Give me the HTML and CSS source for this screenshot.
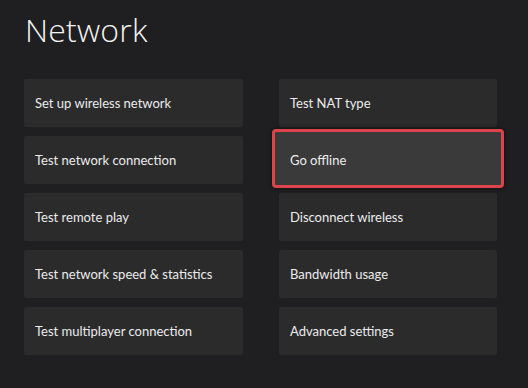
FILE: index.html
```html
<!DOCTYPE html>
<html>
<head>
<meta charset="utf-8">
<link rel="stylesheet" href="styles.css">
</head>
<body>
<main class="page">
  <h1 class="title">Network</h1>
  <div class="grid">
    <div class="tile">Set up wireless network</div>
    <div class="tile">Test network connection</div>
    <div class="tile">Test remote play</div>
    <div class="tile">Test network speed &amp; statistics</div>
    <div class="tile">Test multiplayer connection</div>
    <div class="tile">Test NAT type</div>
    <div class="tile tile-focus"><span class="label">Go offline</span></div>
    <div class="tile">Disconnect wireless</div>
    <div class="tile">Bandwidth usage</div>
    <div class="tile">Advanced settings</div>
  </div>
</main>
</body>
</html>
```
FILE: styles.css
```css
html, body {
  margin: 0;
  padding: 0;
  background: #1f1e20;
  height: 100%;
}
.page {
  padding: 0 24px;
  font-family: "Lato", "Open Sans", sans-serif;
  color: #f0f0f0;
}
.title {
  margin: 0;
  padding-top: 10px;
  padding-left: 1px;
  height: 79px;
  box-sizing: border-box;
  font-family: "Open Sans", sans-serif;
  font-weight: 300;
  font-size: 32px;
  line-height: 40px;
  color: #f4f4f4;
  letter-spacing: 0.2px;
}
.grid {
  display: grid;
  grid-template-columns: 219px 218px;
  grid-template-rows: repeat(5, 48px);
  grid-auto-flow: column;
  column-gap: 36px;
  row-gap: 9px;
}
.tile {
  background: #2b2b2c;
  border-radius: 2px;
  display: flex;
  align-items: center;
  padding-left: 11px;
  font-size: 13px;
  color: #ececec;
}
.tile-focus {
  position: relative;
  background: transparent;
}
.tile-focus::before {
  content: "";
  position: absolute;
  top: -7px;
  bottom: -4px;
  left: -7px;
  right: -7px;
  border: 3px solid #dc444a;
  border-radius: 4px;
  background: #3a3a3b;
  box-shadow: 0 0 4px rgba(0,0,0,0.6);
}
.label {
  position: relative;
}
```
